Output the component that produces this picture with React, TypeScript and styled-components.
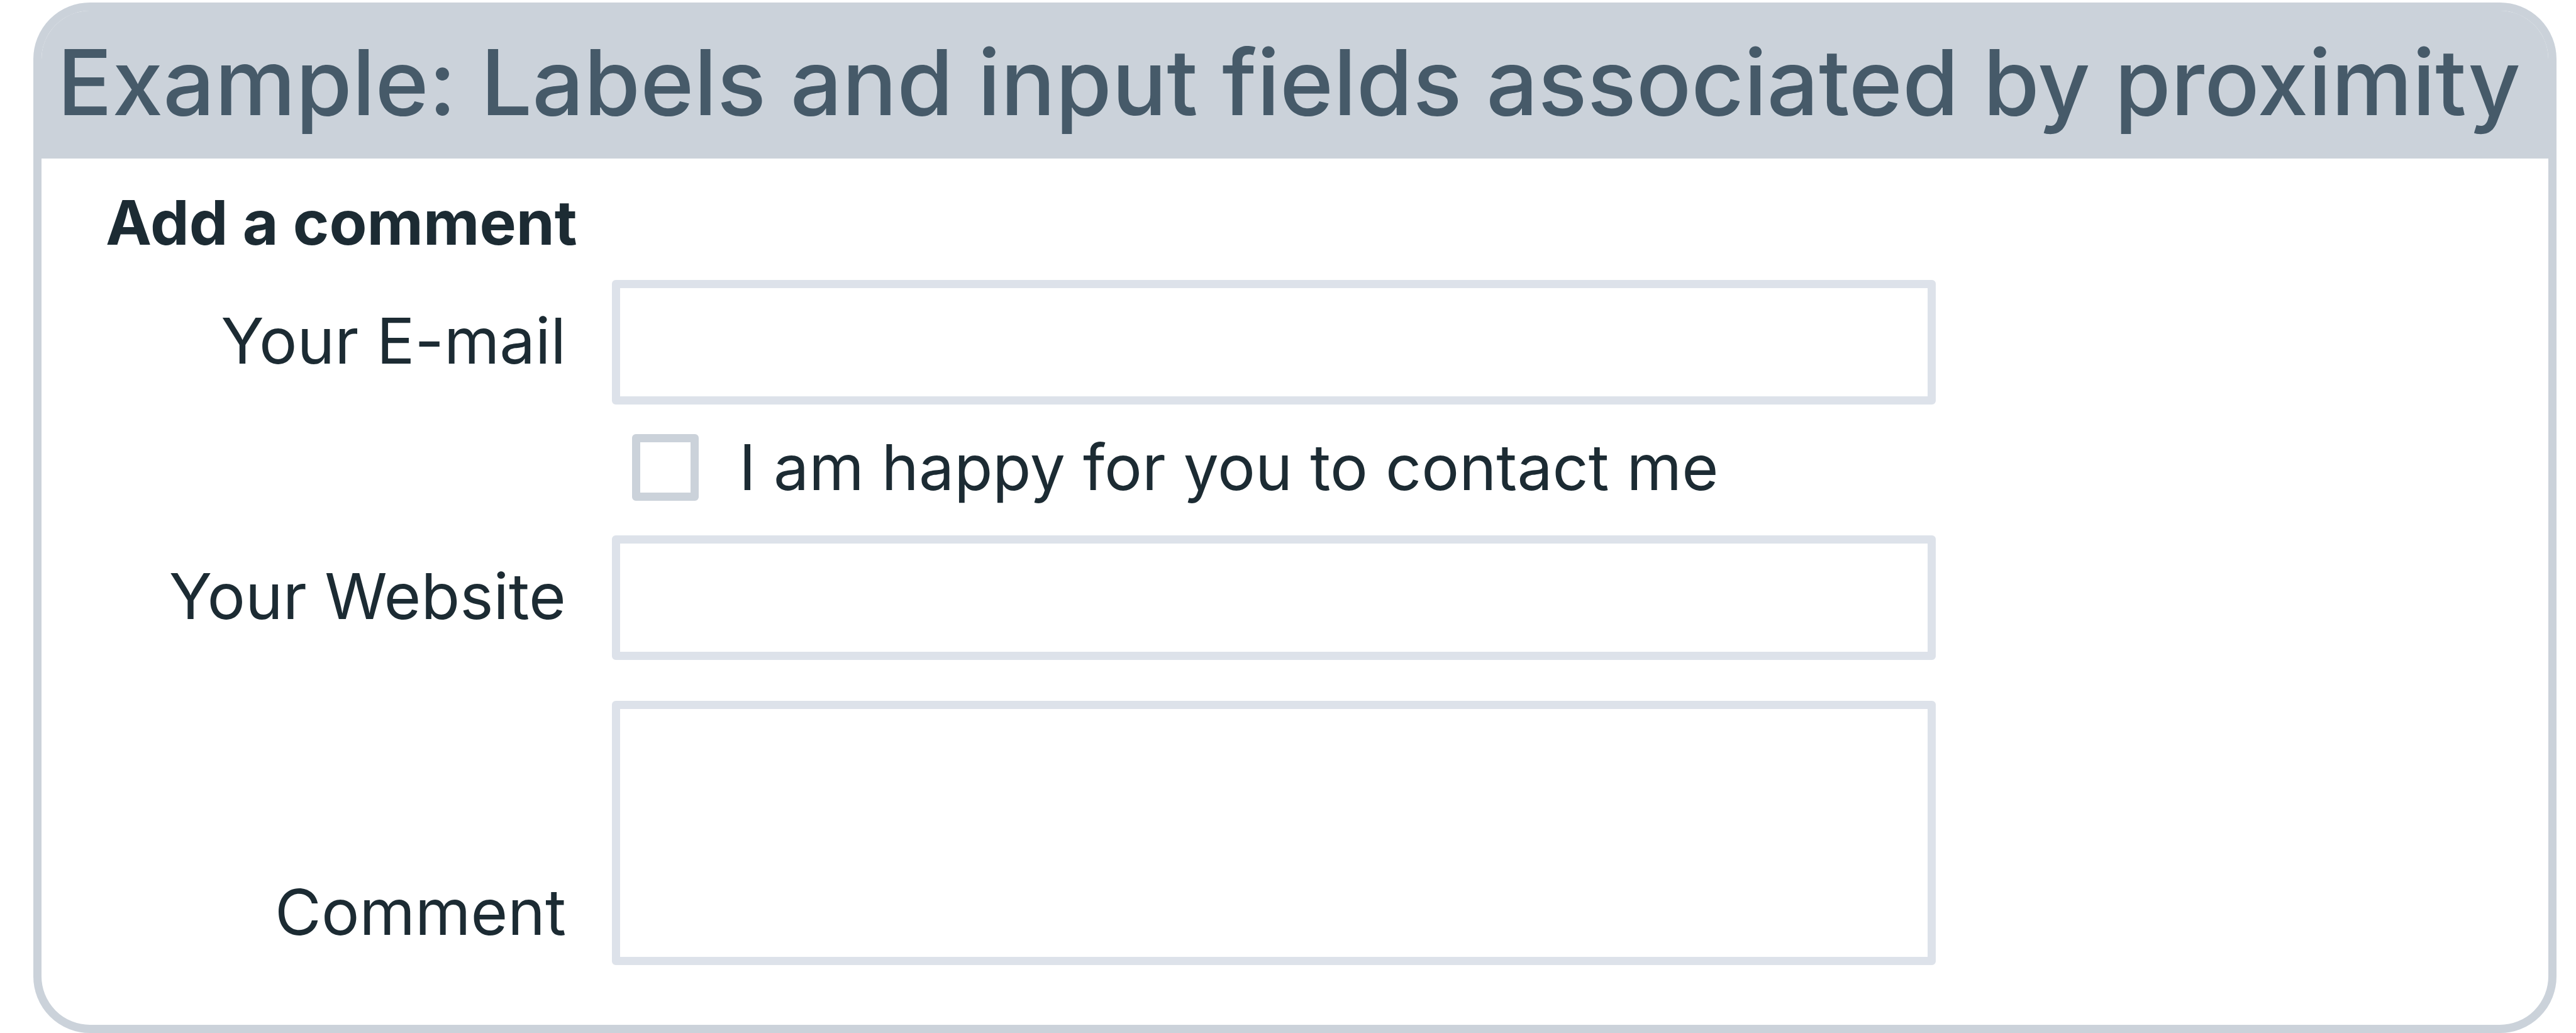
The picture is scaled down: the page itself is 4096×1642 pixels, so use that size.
import React from "react";
import styled, { createGlobalStyle } from "styled-components";

const GlobalStyle = createGlobalStyle`
  * { box-sizing: border-box; }
  body { margin: 0; background: #ffffff; }
`;

const fontStack = `Inter, "Open Sans", sans-serif`;

const Page = styled.main`
  display: flow-root;
  color: #1c2b33;
  font-family: ${fontStack};
`;

const Panel = styled.section`
  margin: 4px 31px 0 53px;
  border: 13px solid #cbd2da;
  border-radius: 90px;
`;

const Title = styled.h1`
  margin: 0;
  padding: 0 25px 7px;
  border-radius: 77px 77px 0 0;
  background: #cbd2da;
  color: #465a69;
  font-size: 145px;
  font-weight: 500;
  line-height: 228px;
  white-space: nowrap;
`;

const Form = styled.form`
  padding: 42px 102px 95px;
`;

const Heading = styled.h2`
  margin: 0 0 31px;
  font-size: 98px;
  font-weight: 700;
  line-height: 120px;
`;

const Field = styled.div<{ $alignEnd?: boolean }>`
  display: grid;
  grid-template-columns: 732px minmax(0, 2105px);
  column-gap: 73px;
  align-items: ${(p) => (p.$alignEnd ? "end" : "center")};

  & + & {
    margin-top: 65px;
  }
`;

const Label = styled.label<{ $raised?: boolean }>`
  padding-bottom: ${(p) => (p.$raised ? 25 : 6)}px;
  font-size: 101px;
  line-height: 120px;
  text-align: right;
`;

const box = `
  display: block;
  width: 100%;
  margin: 0;
  padding: 0 24px;
  border: 13px solid #dde2ea;
  border-radius: 6px;
  background: #ffffff;
  color: inherit;
  font: 400 101px/120px ${fontStack};
  outline: none;
`;

const TextInput = styled.input`
  ${box}
  height: 198px;
`;

const TextArea = styled.textarea`
  ${box}
  height: 420px;
  resize: none;
`;

const Option = styled.div`
  display: flex;
  align-items: center;
  gap: 64px;
  height: 208px;
  padding: 47px 0 55px 837px;
`;

const Checkbox = styled.input`
  appearance: none;
  flex: none;
  width: 106px;
  height: 106px;
  margin: 0;
  border: 13px solid #cbd2da;
  border-radius: 6px;
  background: #ffffff;
`;

const OptionLabel = styled.label`
  font-size: 100px;
  line-height: 120px;
`;

export default function App() {
  return (
    <Page>
      <GlobalStyle />
      <Panel>
        <Title>Example: Labels and input fields associated by proximity</Title>
        <Form>
          <Heading>Add a comment</Heading>
          <Field>
            <Label htmlFor="email">Your E-mail</Label>
            <TextInput id="email" type="email" />
          </Field>
          <Option>
            <Checkbox id="contact" type="checkbox" />
            <OptionLabel htmlFor="contact">I am happy for you to contact me</OptionLabel>
          </Option>
          <Field>
            <Label htmlFor="website">Your Website</Label>
            <TextInput id="website" type="url" />
          </Field>
          <Field $alignEnd>
            <Label htmlFor="comment" $raised>Comment</Label>
            <TextArea id="comment" />
          </Field>
        </Form>
      </Panel>
    </Page>
  );
}
